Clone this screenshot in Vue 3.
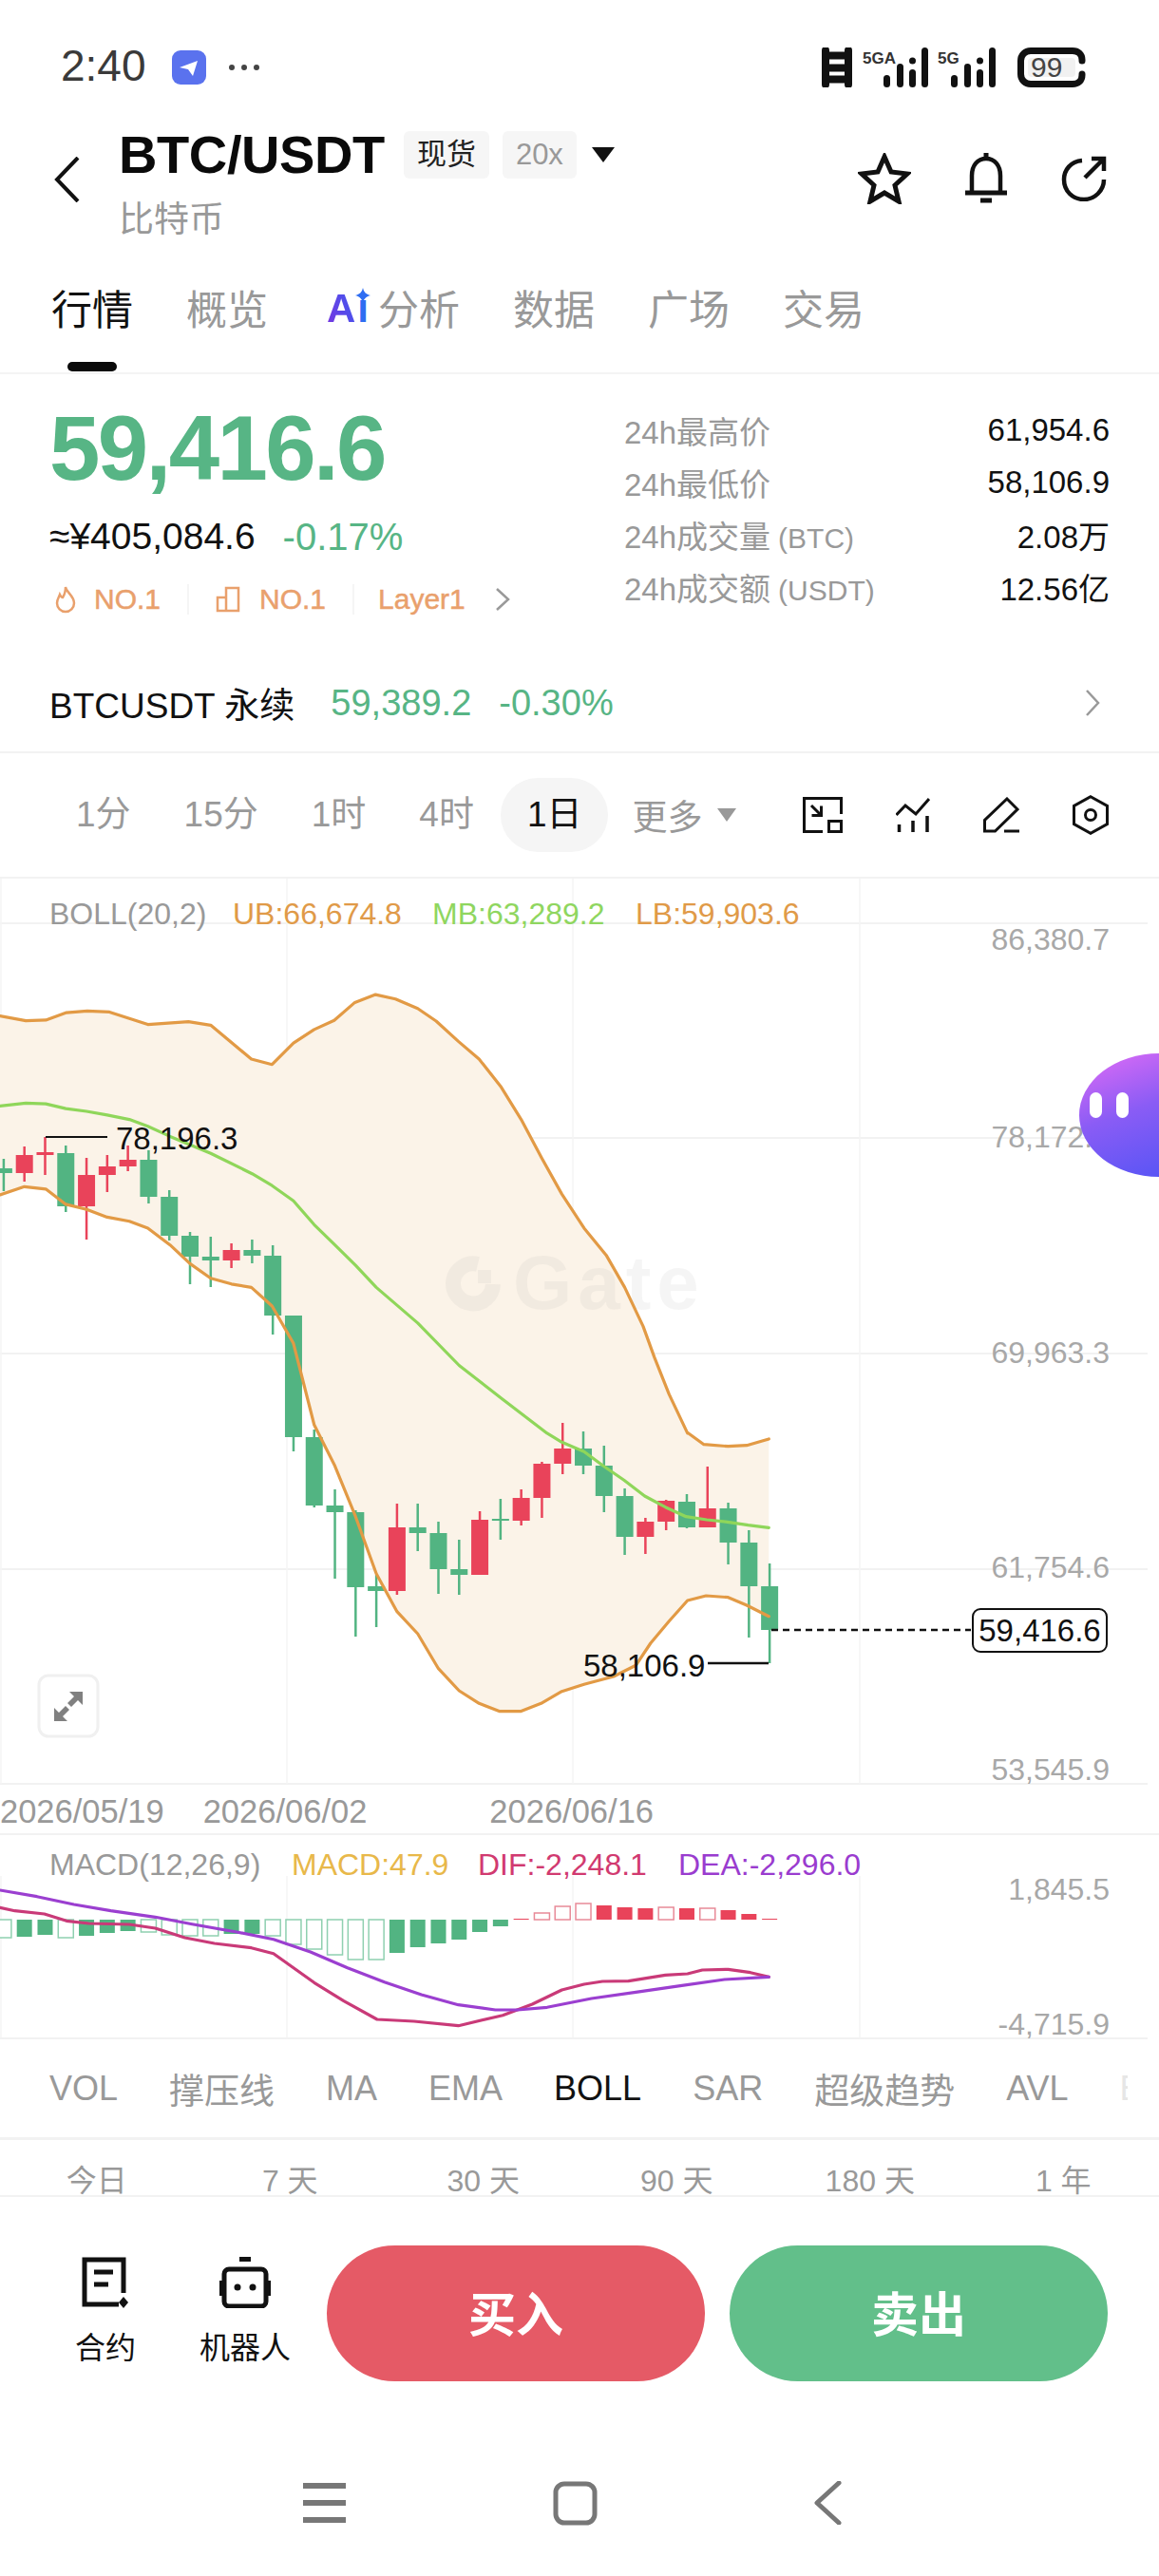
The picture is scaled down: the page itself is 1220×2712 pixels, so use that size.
<script setup>
const tabs = ['概览']
const tabsAfter = ['数据', '广场', '交易']
const stats = [
  ['24h最高价', '', '61,954.6'],
  ['24h最低价', '', '58,106.9'],
  ['24h成交量', '(BTC)', '2.08万'],
  ['24h成交额', '(USDT)', '12.56亿'],
]
const frames = ['1分', '15分', '1时', '4时', '1日']
const indicators = [
  { name: 'VOL' }, { name: '撑压线', cjk: true }, { name: 'MA' }, { name: 'EMA' },
  { name: 'BOLL', on: true }, { name: 'SAR' }, { name: '超级趋势', cjk: true }, { name: 'AVL' },
]
const ranges = ['今日', '7 天', '30 天', '90 天', '180 天', '1 年']

const RED = '#e9435a'
const GREEN = '#52b482'
const candleX = (i) => 3.9 + 21.79 * i

// high, low, body top, body bottom, up
const rawCandles = [
  [1220, 1254, 1230, 1235, 0], [1207, 1244, 1216, 1235, 1], [1197, 1237, 1213, 1216, 1],
  [1206, 1276, 1214, 1270, 0], [1219, 1305, 1237, 1270, 1], [1216, 1255, 1228, 1237, 1],
  [1206, 1233, 1221, 1228, 1], [1211, 1267, 1221, 1260, 0], [1253, 1306, 1260, 1301, 0],
  [1297, 1352, 1301, 1323, 0], [1302, 1355, 1323, 1327, 0], [1309, 1335, 1316, 1327, 1],
  [1305, 1330, 1316, 1322, 0], [1311, 1405, 1322, 1385, 0], [1385, 1528, 1385, 1513, 0],
  [1505, 1587, 1513, 1585, 0], [1568, 1662, 1585, 1592, 0], [1590, 1723, 1592, 1671, 0],
  [1658, 1713, 1670, 1675, 0], [1583, 1679, 1608, 1675, 1], [1583, 1633, 1608, 1614, 0],
  [1602, 1678, 1614, 1652, 0], [1621, 1679, 1652, 1658, 0], [1591, 1658, 1600, 1658, 1],
  [1578, 1621, 1599, 1600, 0], [1568, 1606, 1577, 1601, 1], [1539, 1598, 1541, 1577, 1],
  [1498, 1552, 1525, 1541, 1], [1507, 1552, 1525, 1543, 0], [1522, 1592, 1543, 1575, 0],
  [1567, 1637, 1575, 1618, 0], [1598, 1636, 1602, 1618, 1], [1579, 1611, 1580, 1602, 1],
  [1573, 1609, 1581, 1608, 0], [1544, 1608, 1588, 1608, 1], [1582, 1647, 1588, 1624, 0],
  [1611, 1724, 1624, 1670, 0], [1646, 1751, 1670, 1716, 0],
]
const candles = rawCandles.map((c, i) => ({
  x: candleX(i),
  high: c[0],
  low: c[1],
  top: c[2],
  h: Math.max(c[3] - c[2], 2),
  color: c[4] ? RED : GREEN,
}))

// traced in 1568-wide crop units, then scaled back to page pixels
const upperA = [[0,335],[35,349],[62,347],[90,325],[118,320],[148,323],[200,360],[255,352],[285,362],[340,462],[368,478],[397,415],[425,375],[452,348],[480,295],[508,272],[535,285],[565,313],[590,350],[620,410],[648,462],[678,545],[705,640],[733,755],[760,860],[790,960],[820,1040],[845,1135],[870,1250],[885,1340],[905,1450],[930,1565]]
const upperB = [[930,25],[952,62],[985,68],[1010,65],[1040,45]]
const lowerA = [[0,862],[33,838],[62,845],[89,890],[117,905],[145,928],[175,940],[200,960],[230,1010],[257,1065],[285,1108],[313,1125],[340,1135],[368,1190],[397,1300]]
const lowerB = [[425,0],[453,130],[481,290],[509,470],[537,590],[565,660],[593,770],[621,840],[648,880],[676,905],[704,905],[732,880],[760,842],[790,820],[830,795],[860,760],[880,690],[905,620],[930,555],[955,540],[985,545],[1010,570],[1040,605]]
const midA = [[0,600],[35,592],[62,594],[89,608],[117,616],[145,627],[175,640],[200,660],[230,690],[285,740],[341,800],[368,835],[397,880],[425,950],[453,1010],[481,1070],[509,1135],[565,1240],[621,1365],[680,1465],[740,1565]]
const midB = [[760,55],[790,85],[816,130],[844,175],[872,225],[900,260],[928,290],[956,300],[984,307],[1012,317],[1040,325]]
const dea = [[0,330],[50,350],[100,375],[150,395],[210,415],[260,437],[320,462],[370,485],[420,525],[470,575],[520,620],[570,660],[620,692],[670,708],[700,708],[740,700],[800,672],[860,652],[920,632],[980,612],[1040,604]]
const dif = [[0,385],[20,395],[60,405],[90,427],[120,435],[175,438],[210,450],[250,480],[290,498],[340,512],[370,530],[425,622],[465,680],[510,738],[560,744],[620,758],[680,725],[720,690],[760,645],[790,627],[815,618],[850,617],[900,598],[930,594],[950,582],[985,580],[1015,590],[1040,604]]

const pxA = (p) => [p[0] / 1.285, 950 + p[1] / 2.8]
const pxB = (p) => [p[0] / 1.285, 1500 + p[1] / 3]
const pxM = (p) => [p[0] / 1.285, 1880 + p[1] / 3]
const toPath = (pts) => pts.map((p) => p[0].toFixed(1) + ',' + p[1].toFixed(1)).join(' ')

const upper = [...upperA.map(pxA), ...upperB.map(pxB)]
const lower = [...lowerA.map(pxA), ...lowerB.map(pxB)]
const mid = [...midA.map(pxA), ...midB.map(pxB)]
const upperLine = toPath(upper)
const lowerLine = toPath(lower)
const midLine = toPath(mid)
const bandFill = toPath([...upper, ...[...lower].reverse()])
const deaLine = toPath(dea.map(pxM))
const difLine = toPath(dif.map(pxM))

const gridY = [972, 1198, 1425, 1652, 1878]
const gridX = [1, 302, 603, 905]
// the bot bubble sits over the end of the second label
const priceAxis = [['86,380.7', 988], ['78,172.0', 1196], ['69,963.3', 1423], ['61,754.6', 1649], ['53,545.9', 1862]]

// distance from the zero line, px; negative goes up. second value = hollow
const macdZero = 2021
const histogram = [
  [19, 1], [18, 0], [16, 0], [19, 1], [17, 0], [14, 0], [12, 0], [13, 1], [16, 1], [17, 1],
  [17, 1], [15, 0], [15, 0], [17, 1], [26, 1], [31, 1], [37, 1], [42, 1], [42, 1], [35, 0],
  [29, 0], [25, 0], [21, 0], [13, 0], [7, 0], [-1, 0], [-7, 1], [-14, 1], [-17, 1], [-15, 0],
  [-13, 0], [-12, 0], [-13, 1], [-12, 0], [-12, 1], [-10, 0], [-6, 0], [-1, 0],
].map((b, i) => ({
  x: candleX(i) - 8,
  y: b[0] < 0 ? macdZero + b[0] : macdZero,
  h: Math.abs(b[0]),
  fill: b[1] ? '#fff' : b[0] < 0 ? RED : GREEN,
  stroke: b[0] < 0 ? '#e88a98' : '#8fd0b0',
}))
</script>

<template>
  <div class="page">
    <div class="status">
      <span class="time">2:40</span>
      <svg class="app-badge" width="36" height="36" viewBox="0 0 36 36">
        <rect width="36" height="36" rx="9" fill="#5a72ee" />
        <path d="M8 18 27 11l-5 16-5-7z" fill="#fff" />
      </svg>
      <span class="dots">
        <i /><i /><i />
      </span>
      <div class="status-right">
        <svg class="ladder" width="32" height="42" viewBox="0 0 32 42">
          <path d="M4 3v36M28 3v36" stroke="#111" stroke-width="8" stroke-linecap="round" fill="none" />
          <path d="M4 8.5h24M4 21.5h24M4 33.5h24" stroke="#111" stroke-width="8" fill="none" />
        </svg>
        <div class="signal wide">
          <span class="net">5GA</span>
          <svg width="47" height="42" viewBox="0 0 47 42">
            <g fill="#111">
              <rect x="0" y="29" width="7" height="13" rx="3.5" />
              <rect x="14" y="17" width="7" height="25" rx="3.5" />
              <circle cx="30.5" cy="14" r="3.5" />
              <rect x="27" y="23" width="7" height="19" rx="3.5" />
              <rect x="40" y="0" width="7" height="42" rx="3.5" />
            </g>
          </svg>
        </div>
        <div class="signal">
          <span class="net">5G</span>
          <svg width="47" height="42" viewBox="0 0 47 42">
            <g fill="#111">
              <rect x="0" y="29" width="7" height="13" rx="3.5" />
              <rect x="14" y="17" width="7" height="25" rx="3.5" />
              <circle cx="30.5" cy="14" r="3.5" />
              <rect x="27" y="23" width="7" height="19" rx="3.5" />
              <rect x="40" y="0" width="7" height="42" rx="3.5" />
            </g>
          </svg>
        </div>
        <svg class="battery" width="72" height="42" viewBox="0 0 72 42">
          <path d="M68 14V13C68 7 64 3.500 58 3.500H14C8 3.500 3.500 8 3.500 14V28C3.500 34 8 38.500 14 38.500H58C64 38.500 68 35 68 29V28" fill="none" stroke="#111" stroke-width="7" stroke-linecap="round" />
          <rect x="11" y="11" width="50" height="20" rx="4" fill="#f1f1f1" />
          <text x="14" y="31" class="battery-text">99</text>
        </svg>
      </div>
    </div>

    <div class="header">
      <svg class="back" width="27" height="48" viewBox="0 0 27 48">
        <path d="M25 1 3 24l22 23" fill="none" stroke="#111" stroke-width="4" />
      </svg>
      <div class="title-col">
        <div class="title-row">
          <h1>BTC/USDT</h1>
          <span class="tag dark">现货</span>
          <span class="tag">20x</span>
          <span class="caret" />
        </div>
        <div class="sub">比特币</div>
      </div>
      <div class="header-actions">
        <svg width="56" height="54" viewBox="0 0 56 54">
          <path d="M28 4l7 16 17 2-13 12 4 17-15-9-15 9 4-17L4 22l17-2z" fill="none" stroke="#111" stroke-width="5" stroke-linejoin="miter" />
        </svg>
        <svg width="48" height="54" viewBox="0 0 48 54">
          <path d="M9 42V24C9 13 15 6 24 6s15 7 15 18v18" fill="none" stroke="#111" stroke-width="4.5" />
          <path d="M24 0v7M2 42h44M18 50h12" fill="none" stroke="#111" stroke-width="5" />
        </svg>
        <svg width="50" height="48" viewBox="0 0 50 48">
          <path d="M22 5C10 6 3 15 3 25c0 12 9 21 21 21 11 0 21-9 21-21" fill="none" stroke="#111" stroke-width="4.5" />
          <path d="M25 23 44 4M32 3h13v13" fill="none" stroke="#111" stroke-width="4.5" />
        </svg>
      </div>
    </div>

    <div class="tabs">
      <span class="tab active">行情</span>
      <span class="tab" v-for="t in tabs" :key="t">{{ t }}</span>
      <span class="tab ai">
        <b class="ai-a">A</b><b class="ai-i">ı<svg class="ai-star" width="16" height="16" viewBox="0 0 16 16"><path d="M8 0c1 4.500 3 6.500 8 8-5 1.500-7 3.500-8 8-1-4.500-3-6.500-8-8 5-1.500 7-3.500 8-8z" fill="#2e6df2" /></svg></b>
        <em>分析</em>
      </span>
      <span class="tab" v-for="t in tabsAfter" :key="t">{{ t }}</span>
    </div>
    <div class="tab-mark" />
    <div class="rule" />

    <div class="price-section">
      <div class="price-left">
        <div class="price">59,416.6</div>
        <div class="price-sub">
          <span>≈¥405,084.6</span>
          <span class="change">-0.17%</span>
        </div>
        <div class="badges">
          <svg class="flame" width="24" height="30" viewBox="0 0 24 30">
            <path d="M12 2c1 6 9 9 9 17a9 9 0 0 1-18 0c0-4 2-6 3-9 1 2 2 3 3 3 2-3 3-7 3-11z" fill="none" stroke="#e9a06c" stroke-width="2.5" />
          </svg>
          <span class="badge-text">NO.1</span>
          <i class="sep" />
          <svg class="rank" width="28" height="30" viewBox="0 0 28 30">
            <path d="M11 27V3h13v24zM11 27H2V13h9" fill="none" stroke="#e9a06c" stroke-width="2.5" />
          </svg>
          <span class="badge-text">NO.1</span>
          <i class="sep" />
          <span class="badge-text layer">Layer1</span>
          <svg class="badge-arrow" width="16" height="24" viewBox="0 0 16 24">
            <path d="M2 1l12 11L2 23" fill="none" stroke="#999" stroke-width="2.5" />
          </svg>
        </div>
      </div>
      <div class="price-right">
        <div class="stat" v-for="s in stats" :key="s[0]">
          <span class="stat-label">{{ s[0] }}<small v-if="s[1]">{{ s[1] }}</small></span>
          <span class="stat-value">{{ s[2] }}</span>
        </div>
      </div>
    </div>

    <div class="perp">
      <span class="perp-name">BTCUSDT 永续</span>
      <span class="perp-price">59,389.2</span>
      <span class="perp-change">-0.30%</span>
      <svg class="perp-arrow" width="16" height="28" viewBox="0 0 16 28">
        <path d="M2 1l12 13L2 27" fill="none" stroke="#999" stroke-width="2.5" />
      </svg>
    </div>

    <div class="frames">
      <span class="frame" v-for="f in frames" :key="f" :class="{ on: f === '1日' }">{{ f }}</span>
      <span class="more">更多</span>
      <span class="more-caret" />
      <div class="tools">
        <svg width="42" height="38" viewBox="0 0 42 38">
          <path d="M40.500 18V1.500H1.500V36.500H21" fill="none" stroke="#111" stroke-width="3" />
          <rect x="27.500" y="25.500" width="13" height="11" fill="none" stroke="#111" stroke-width="3" />
          <path d="M9 9l10 10M19.500 9.500v10h-10" fill="none" stroke="#111" stroke-width="3" />
        </svg>
        <svg width="36" height="36" viewBox="0 0 36 36">
          <path d="M0.500 18 10 8l11 9L35 1" fill="none" stroke="#111" stroke-width="3" />
          <path d="M3.500 28v8M18 24v12M33 19v17" fill="none" stroke="#111" stroke-width="3.500" />
        </svg>
        <svg width="38" height="38" viewBox="0 0 38 38">
          <path d="M25 2 36 13 12.500 36H1.500V24.500zM22 36h16" fill="none" stroke="#111" stroke-width="3" />
        </svg>
        <svg width="38" height="42" viewBox="0 0 38 42">
          <path d="M19 1.700 36.500 11.500v19L19 40.300 1.500 30.500v-19z" fill="none" stroke="#111" stroke-width="3" />
          <circle cx="19" cy="21" r="5.500" fill="none" stroke="#111" stroke-width="3" />
        </svg>
      </div>
    </div>

    <div class="chart-wrap">
      <svg class="kline" width="1220" height="955" viewBox="0 925 1220 955">
        <line v-for="y in gridY" :key="y" x1="0" x2="1208" :y1="y" :y2="y" class="grid" />
        <line v-for="x in gridX" :key="x" :x1="x" :x2="x" y1="925" y2="1878" class="grid thin" />

        <polygon :points="bandFill" fill="#fbf3e8" />
        <g class="watermark">
          <path d="M503 1331A21 21 0 1 0 519 1352" fill="none" stroke-width="16" />
          <rect x="503" y="1337" width="14" height="14" stroke="none" />
          <text x="540" y="1378" font-size="80" font-weight="700" letter-spacing="6" stroke="none">Gate</text>
        </g>

        <g v-for="c in candles" :key="c.x">
          <line :x1="c.x" :x2="c.x" :y1="c.high" :y2="c.low" :stroke="c.color" stroke-width="2.5" />
          <rect :x="c.x - 9" :y="c.top" width="18" :height="c.h" :fill="c.color" />
        </g>

        <polyline :points="upperLine" class="line" stroke="#e29a45" />
        <polyline :points="lowerLine" class="line" stroke="#e29a45" />
        <polyline :points="midLine" class="line" stroke="#8fd65a" />

        <text x="52" y="973" class="legend" fill="#999">BOLL(20,2)</text>
        <text x="245" y="973" class="legend" fill="#e09a48">UB:66,674.8</text>
        <text x="455" y="973" class="legend" fill="#8fd65f">MB:63,289.2</text>
        <text x="669" y="973" class="legend" fill="#e09a48">LB:59,903.6</text>

        <text v-for="p in priceAxis" :key="p[0]" x="1168" :y="p[1] + 12" text-anchor="end" class="axis">{{ p[0] }}</text>

        <path d="M48 1197h65" stroke="#111" stroke-width="2" />
        <text x="122" y="1210" class="note">78,196.3</text>
        <path d="M745 1751h64" stroke="#111" stroke-width="2.5" />
        <text x="614" y="1765" class="note">58,106.9</text>

        <line x1="812" x2="1022" y1="1716" y2="1716" stroke="#111" stroke-width="2.5" stroke-dasharray="7 5" />
        <rect x="1024" y="1694" width="141" height="45" rx="8" fill="#fff" stroke="#111" stroke-width="2" />
        <text x="1094.5" y="1728" text-anchor="middle" class="note">59,416.6</text>

        <rect x="41" y="1764" width="62" height="64" rx="10" fill="#fff" stroke="#f0f0f0" stroke-width="3" />
        <g fill="#808080">
          <path d="M87 1781v14l-5-5-7 7-4-4 7-7-5-5z" />
          <path d="M57 1812v-14l5 5 7-7 4 4-7 7 5 5z" />
        </g>
      </svg>
      <div class="bot">
        <i /><i />
      </div>
    </div>

    <div class="dates">
      <span>2026/05/19</span>
      <span class="d2">2026/06/02</span>
      <span class="d3">2026/06/16</span>
    </div>

    <svg class="macd" width="1220" height="215" viewBox="0 1932 1220 215">
      <line v-for="x in gridX" :key="x" :x1="x" :x2="x" y1="1975" y2="2146" class="grid thin" />
      <line x1="0" x2="1208" y1="2146" y2="2146" class="grid" />
      <text x="52" y="1974" class="legend" fill="#999">MACD(12,26,9)</text>
      <text x="307" y="1974" class="legend" fill="#e8b84a">MACD:47.9</text>
      <text x="503" y="1974" class="legend" fill="#d13a70">DIF:-2,248.1</text>
      <text x="714" y="1974" class="legend" fill="#9a3ccf">DEA:-2,296.0</text>
      <text x="1168" y="2000" text-anchor="end" class="axis">1,845.5</text>
      <text x="1168" y="2142" text-anchor="end" class="axis">-4,715.9</text>
      <rect v-for="b in histogram" :key="b.x" :x="b.x" :y="b.y" width="16" :height="b.h" :fill="b.fill" :stroke="b.fill === '#fff' ? b.stroke : 'none'" stroke-width="1.5" />
      <polyline :points="difLine" class="line" stroke="#c93a78" />
      <polyline :points="deaLine" class="line" stroke="#9b3fd0" />
    </svg>

    <div class="indicators">
      <span v-for="n in indicators" :key="n.name" :class="{ on: n.on, cjk: n.cjk }">{{ n.name }}</span>
      <span class="clipped">BIAS</span>
    </div>

    <div class="ranges">
      <span v-for="r in ranges" :key="r">{{ r }}</span>
    </div>

    <div class="actions">
      <div class="action first">
        <svg width="50" height="54" viewBox="0 0 50 54">
          <path d="M44 38V3H3v47h36" fill="none" stroke="#111" stroke-width="5" />
          <path d="M13 16h20M13 29h15" fill="none" stroke="#111" stroke-width="5" />
          <path d="M44 42l5 6-5 6-5-6z" fill="#111" />
        </svg>
        <span>合约</span>
      </div>
      <div class="action second">
        <svg width="54" height="54" viewBox="0 0 54 54">
          <path d="M21 2h12" stroke="#111" stroke-width="6" />
          <rect x="5" y="13" width="44" height="39" rx="5" fill="none" stroke="#111" stroke-width="5" />
          <path d="M2 25v16M52 25v16" stroke="#111" stroke-width="4" />
          <circle cx="19" cy="32" r="3.5" fill="#111" />
          <circle cx="35" cy="32" r="3.5" fill="#111" />
        </svg>
        <span>机器人</span>
      </div>
      <button class="trade buy">买入</button>
      <button class="trade sell">卖出</button>
    </div>

    <div class="nav">
      <svg width="45" height="42" viewBox="0 0 45 42">
        <path d="M0 3h45M0 21h45M0 39h45" stroke="#777" stroke-width="6" />
      </svg>
      <svg class="nav-home" width="47" height="47" viewBox="0 0 47 47">
        <rect x="3" y="3" width="41" height="41" rx="9" fill="none" stroke="#777" stroke-width="5" />
      </svg>
      <svg class="nav-back" width="30" height="46" viewBox="0 0 30 46">
        <path d="M27 2 4 23l23 21" fill="none" stroke="#777" stroke-width="5" stroke-linecap="round" stroke-linejoin="round" />
      </svg>
    </div>
  </div>
</template>

<style>
html,
body {
  margin: 0;
  background: #fff;
}
</style>

<style scoped>
.page {
  width: 1220px;
  height: 2712px;
  overflow: hidden;
  background: #fff;
  color: #111;
  font-family: "Liberation Sans", "Noto Sans CJK SC", sans-serif;
}
.status {
  height: 130px;
  display: flex;
  align-items: flex-start;
  padding: 47px 0 0 64px;
  box-sizing: border-box;
}
.time {
  font-size: 46px;
  line-height: 44px;
  color: #3a3a3a;
  margin-right: 27px;
}
.app-badge {
  margin-top: 6px;
}
.dots {
  display: flex;
  gap: 7px;
  margin: 21px 0 0 24px;
}
.dots i {
  width: 6px;
  height: 6px;
  border-radius: 50%;
  background: #444;
}
.status-right {
  display: flex;
  align-items: flex-start;
  margin: 3px 0 0 auto;
  padding-right: 77px;
}
.ladder {
  margin-right: 11px;
}
.signal {
  position: relative;
  width: 61px;
  display: flex;
  justify-content: flex-end;
}
.signal.wide {
  width: 69px;
  margin-right: 10px;
}
.net {
  position: absolute;
  left: 0;
  top: 4px;
  font-size: 17px;
  line-height: 16px;
  font-weight: 700;
  color: #333;
}
.battery {
  margin-left: 23px;
}
.battery-text {
  font-size: 30px;
  fill: #444;
}

.header {
  height: 160px;
  display: flex;
  position: relative;
  padding-left: 57px;
  box-sizing: border-box;
}
.back {
  margin: 35px 0 0 0;
}
.title-col {
  margin-left: 41px;
  padding-top: 8px;
}
.title-row {
  display: flex;
  align-items: flex-start;
}
.title-row h1 {
  margin: 0 20px 0 0;
  font-size: 56px;
  line-height: 50px;
  font-weight: 700;
  letter-spacing: -0.4px;
  color: #0a0a0a;
}
.tag {
  height: 50px;
  padding: 0 14px;
  margin-right: 14px;
  border-radius: 6px;
  background: #f6f6f6;
  color: #999;
  font-size: 31px;
  line-height: 50px;
}
.tag.dark {
  color: #222;
}
.caret {
  width: 0;
  height: 0;
  margin: 17px 0 0 2px;
  border-left: 12px solid transparent;
  border-right: 12px solid transparent;
  border-top: 16px solid #111;
}
.sub {
  margin-top: 24px;
  font-size: 37px;
  line-height: 40px;
  color: #999;
}
.header-actions {
  display: flex;
  align-items: center;
  gap: 55px;
  margin-left: auto;
  padding-right: 53px;
  height: 90px;
  margin-top: 13px;
  align-self: flex-start;
}

.tabs {
  height: 72px;
  box-sizing: border-box;
  padding: 0 0 6px 54px;
  display: flex;
  align-items: center;
  gap: 56px;
  font-size: 43px;
  color: #999;
}
.tab.active {
  color: #111;
}
.tab.ai {
  display: flex;
  align-items: center;
  margin-left: 6px;
}
.tab.ai b {
  font-size: 42px;
  font-weight: 700;
  margin-top: 4px;
}
.ai-a {
  color: #5a3fe0;
  background: linear-gradient(70deg, #7a35e0, #3b5bf0);
  -webkit-background-clip: text;
  background-clip: text;
  -webkit-text-fill-color: transparent;
}
.tab.ai .ai-i {
  position: relative;
  color: #2e6df2;
  margin-left: 2px;
  margin-right: 10px;
}
.ai-star {
  position: absolute;
  left: -2px;
  top: 2px;
}
.tab.ai em {
  font-style: normal;
}
.tab-mark {
  width: 52px;
  height: 10px;
  margin: 19px 0 0 71px;
  border-radius: 5px;
  background: #0a0a0a;
}
.rule {
  height: 2px;
  background: #f4f4f4;
  margin-top: 1px;
}

.price-section {
  height: 295px;
  display: flex;
}
.price-left {
  width: 657px;
  padding: 28px 0 0 52px;
  box-sizing: border-box;
}
.price {
  font-size: 96px;
  line-height: 100px;
  font-weight: 700;
  letter-spacing: -2.6px;
  color: #57b585;
}
.price-sub {
  margin-top: 20px;
  height: 46px;
  font-size: 39px;
  line-height: 46px;
  display: flex;
  gap: 29px;
}
.change {
  color: #57b585;
  font-size: 40px;
}
.badges {
  margin-top: 23px;
  height: 40px;
  display: flex;
  align-items: center;
}
.badge-text {
  font-size: 30px;
  line-height: 40px;
  color: #e9a06c;
  margin-left: 18px;
  -webkit-text-stroke: 0.5px #e9a06c;
}
.badge-text.layer {
  margin-left: 25px;
}
.flame {
  margin-left: 5px;
}
.rank {
  margin-left: 28px;
}
.sep {
  width: 2px;
  height: 32px;
  background: #f5f5f5;
  margin-left: 28px;
}
.badge-arrow {
  margin-left: 31px;
}
.price-right {
  flex: 1;
  padding: 31px 52px 0 0;
}
.stat {
  height: 55px;
  display: flex;
  align-items: center;
  justify-content: space-between;
  font-size: 33px;
}
.stat-label {
  color: #999;
}
.stat-label small {
  font-size: 30px;
  margin-left: 8px;
}
.stat-value {
  color: #111;
}

.perp {
  height: 104px;
  box-sizing: border-box;
  padding: 2px 62px 2px 52px;
  border-bottom: 2px solid #f2f2f2;
  display: flex;
  align-items: center;
  font-size: 38px;
}
.perp-name {
  font-size: 37px;
  color: #111;
  margin-right: 38px;
}
.perp-price,
.perp-change {
  color: #57b585;
}
.perp-change {
  margin-left: 29px;
}
.perp-arrow {
  margin-left: auto;
}

.frames {
  height: 132px;
  box-sizing: border-box;
  padding: 0 53px 0 52px;
  border-bottom: 2px solid #f2f2f2;
  display: flex;
  align-items: center;
  font-size: 37px;
  color: #999;
}
.frame {
  height: 78px;
  line-height: 78px;
  padding: 0 28px;
  border-radius: 39px;
}
.frame.on {
  background: #f5f5f5;
  color: #111;
}
.more {
  margin-left: 25px;
}
.more-caret {
  width: 0;
  height: 0;
  margin-left: 16px;
  border-left: 10px solid transparent;
  border-right: 10px solid transparent;
  border-top: 14px solid #999;
}
.tools {
  display: flex;
  align-items: center;
  gap: 56px;
  margin-left: auto;
}

.chart-wrap {
  position: relative;
  height: 955px;
}
.kline,
.macd {
  display: block;
  overflow: visible;
}
.grid {
  stroke: #f2f2f2;
  stroke-width: 2;
}
.grid.thin {
  stroke-width: 1.5;
  stroke: #f4f4f4;
}
.line {
  fill: none;
  stroke-width: 3.2;
  stroke-linejoin: round;
  stroke-linecap: round;
}
.watermark {
  fill: #808080;
  stroke: #808080;
  opacity: 0.07;
}
.legend {
  font-size: 32px;
}
.axis {
  font-size: 32px;
  fill: #a8a8a8;
}
.note {
  font-size: 33px;
  fill: #111;
}
.bot {
  position: absolute;
  right: 0;
  top: 184px;
  width: 84px;
  height: 130px;
  border-radius: 84px 0 0 84px / 65px 0 0 65px;
  background: linear-gradient(160deg, #e26cf5 0%, #8a5cf5 50%, #5a55f5 100%);
  display: flex;
  gap: 15px;
  padding: 41px 0 0 11px;
  box-sizing: border-box;
}
.bot i {
  width: 13px;
  height: 27px;
  border-radius: 7px;
  background: #fff;
}

.dates {
  height: 52px;
  box-sizing: border-box;
  padding-top: 4px;
  border-bottom: 2px solid #f2f2f2;
  display: flex;
  align-items: center;
  font-size: 34.5px;
  color: #999;
  white-space: nowrap;
}
.d2 {
  margin-left: 41px;
}
.d3 {
  margin-left: 129px;
}

.indicators {
  height: 106px;
  box-sizing: border-box;
  padding-left: 52px;
  border-bottom: 3px solid #f2f2f2;
  display: flex;
  align-items: center;
  gap: 54px;
  font-size: 36px;
  color: #999;
  white-space: nowrap;
  overflow: hidden;
}
.indicators .cjk {
  font-size: 37px;
}
.indicators .on {
  color: #111;
}
.indicators .clipped {
  width: 8px;
  flex: none;
  overflow: hidden;
  color: #e6e6e6;
}

.ranges {
  height: 60px;
  box-sizing: border-box;
  padding-top: 26px;
  border-bottom: 2px solid #f2f2f2;
  display: grid;
  grid-template-columns: repeat(6, 203.5px);
  font-size: 32px;
  line-height: 34px;
  color: #999;
  text-align: center;
}

.actions {
  height: 297px;
  box-sizing: border-box;
  display: flex;
  align-items: flex-start;
  padding-top: 51px;
}
.action {
  margin-top: 12px;
  display: flex;
  flex-direction: column;
  align-items: center;
  font-size: 32px;
  line-height: 36px;
  color: #111;
}
.action span {
  margin-top: 24px;
}
.action.first {
  margin-left: 79px;
  width: 64px;
}
.action.second {
  margin-left: 67px;
  width: 96px;
}
.trade {
  height: 143px;
  width: 398px;
  padding: 0 0 6px;
  border: 0;
  border-radius: 72px;
  color: #fff;
  font-family: inherit;
  font-size: 50px;
  font-weight: 700;
}
.buy {
  margin-left: 38px;
  background: #e55a66;
}
.sell {
  margin-left: 26px;
  background: #62bf8a;
}

.nav {
  display: flex;
  align-items: center;
  padding: 2px 0 0 319px;
  height: 46px;
}
.nav-home {
  margin-left: 218px;
}
.nav-back {
  margin-left: 227px;
}
</style>
